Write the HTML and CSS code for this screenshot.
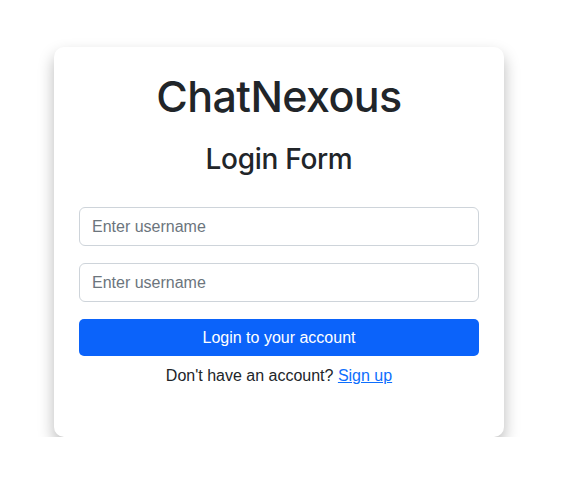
FILE: index.html
```html
<!DOCTYPE html>
<html lang="en">
<head>
<meta charset="utf-8">
<title>ChatNexous</title>
<link rel="stylesheet" href="styles.css">
</head>
<body>
<main class="page">
  <div class="card">
    <h1 class="brand">ChatNexous</h1>
    <h2 class="form-title">Login Form</h2>
    <form class="login-form">
      <input class="form-control" type="text" placeholder="Enter username">
      <input class="form-control" type="password" placeholder="Enter username">
      <button class="btn-primary" type="button">Login to your account</button>
    </form>
    <p class="signup">Don't have an account? <a href="#">Sign up</a></p>
  </div>
</main>
</body>
</html>
```
FILE: styles.css
```css
* { box-sizing: border-box; }
html, body { margin: 0; padding: 0; background: #fff; }
body {
  font-family: "Liberation Sans", Arial, sans-serif;
  color: #212529;
  font-size: 16px;
  line-height: 1.5;
}
.page {
  padding: 47px 0 0 54px;
}
.card {
  width: 450px;
  height: 390px;
  background: #fff;
  border-radius: 10px;
  box-shadow: 0 8px 16px rgba(0,0,0,0.28);
  padding: 24px 25px;
  display: flex;
  flex-direction: column;
  align-items: stretch;
}
.brand {
  margin: 0;
  font-family: Inter, "Liberation Sans", sans-serif;
  font-size: 43px;
  font-weight: 500;
  line-height: 1.2;
  text-align: center;
  letter-spacing: -0.6px;
}
.form-title {
  margin: 20px 0 0;
  font-family: Inter, "Liberation Sans", sans-serif;
  font-size: 28px;
  font-weight: 500;
  line-height: 1.2;
  text-align: center;
  letter-spacing: -0.3px;
}
.login-form {
  margin-top: 31px;
  display: flex;
  flex-direction: column;
  gap: 17px;
}
.form-control {
  width: 400px;
  height: 39px;
  border: 1px solid #ced4da;
  border-radius: 6px;
  padding: 6px 12px;
  font-family: inherit;
  font-size: 16px;
  color: #212529;
  background: #fff;
}
.form-control::placeholder { color: #6c757d; }
.btn-primary {
  width: 400px;
  height: 37px;
  border: 0;
  border-radius: 5px;
  background: #0b63fa;
  color: #fff;
  font-family: inherit;
  font-size: 16px;
  cursor: pointer;
}
.signup {
  margin: 8px 0 0;
  text-align: center;
}
.signup a { color: #0d6efd; text-decoration: underline; }
```
